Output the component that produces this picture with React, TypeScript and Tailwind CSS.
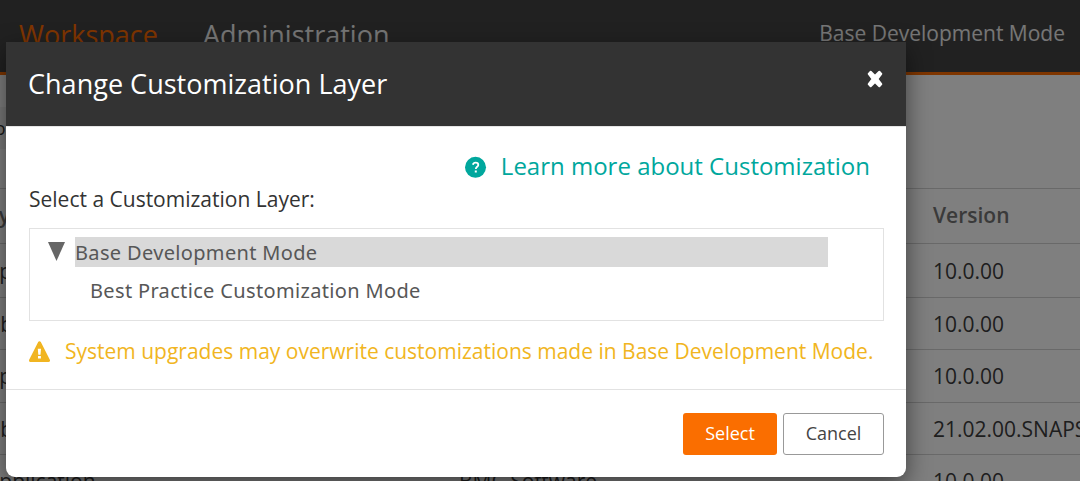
import React from "react";

const rows = [
  { type: "Application", vendor: "BMC Software", version: "10.0.00", height: "h-[54px]", shift: "" },
  { type: "Library", vendor: "BMC Software", version: "10.0.00", height: "h-[52px]", shift: "-indent-[2px]" },
  { type: "Application", vendor: "BMC Software", version: "10.0.00", height: "h-[53px]", shift: "" },
  { type: "Library", vendor: "BMC Software", version: "21.02.00.SNAPSHOT", height: "h-[52px]", shift: "-indent-[2px]" },
  { type: "Application", vendor: "BMC Software", version: "10.0.00", height: "h-[53px]", shift: "" },
];

function CloseIcon() {
  return (
    <svg width="16" height="18" viewBox="0 0 16 18" fill="white" stroke="white" strokeWidth="2" strokeLinejoin="round">
      <path d="M3.7 1.7 8 6 12.3 1.7 14.3 4 10.5 9 14.3 14 12.3 16.3 8 12 3.7 16.3 1.7 14 5.5 9 1.7 4Z" />
    </svg>
  );
}

function HelpIcon() {
  return (
    <svg width="22" height="22" viewBox="0 0 22 22" fill="none">
      <circle cx="10.5" cy="11.3" r="10.5" fill="#00a79d" />
      <path d="M7.9 8.8C8.3 7.2 9.3 6.7 10.6 6.7c1.7 0 2.7.9 2.7 2.2 0 1.8-2.5 1.9-2.5 4" stroke="white" strokeWidth="1.8" />
      <path d="M9.8 14.4h2v2h-2z" fill="white" />
    </svg>
  );
}

function WarningIcon() {
  return (
    <svg width="22" height="22" viewBox="0 0 22 22">
      <path d="M11.5 1.8 20.5 19.4H2.5Z" fill="#f1b521" stroke="#f1b521" strokeWidth="3" strokeLinejoin="round" />
      <path d="M9.8 7.8h3.2l-.5 6h-2.2zM10 15h2.9v2.6H10z" fill="white" />
    </svg>
  );
}

function Background() {
  return (
    <div className="flex h-[481px] flex-col overflow-hidden bg-white">
      <header className="flex h-[75px] shrink-0 items-start justify-between border-b-[3px] border-[#ff6d00] bg-[#424242] pr-[15px] pl-[19px]">
        <nav className="flex gap-[45px] text-[27px] leading-[70px]">
          <span className="text-[#fe6a00]">Workspace</span>
          <span className="text-[#ededed]">Administration</span>
        </nav>
        <span className="text-[21px] leading-[67px] text-[#ededed]">Base Development Mode</span>
      </header>
      <div className="flex h-[113px] shrink-0 pt-8">
        <div className="-ml-[38px] h-[42px] w-[240px] bg-[#f2f2f2] pl-[12px] text-[18px] leading-[42px] text-[#333]">Tool</div>
      </div>
      <div className="-ml-[13px] flex h-[55px] shrink-0 items-center border-t border-[#d2d2d2] text-[21px] font-semibold text-[#747474]">
        <span className="w-[473px] shrink-0">Type</span>
        <span className="w-[473px] shrink-0">Vendor</span>
        <span>Version</span>
      </div>
      {rows.map((row, i) => (
        <div key={i} className={`-ml-[14px] flex shrink-0 items-center border-t border-[#d2d2d2] pt-[2px] text-[21px] whitespace-nowrap text-[#3c3c3c] ${row.height}`}>
          <span className={`w-[473px] shrink-0 ${row.shift}`}>{row.type}</span>
          <span className="w-[474px] shrink-0">{row.vendor}</span>
          <span>{row.version}</span>
        </div>
      ))}
    </div>
  );
}

function Dialog() {
  return (
    <section role="dialog" className="absolute top-[42px] left-[6px] flex h-[435px] w-[900px] flex-col overflow-hidden rounded-b-[9px] bg-white shadow-[0_8px_23px_rgba(0,0,0,0.5)]">
      <header className="flex h-[85px] shrink-0 items-start justify-between border-b border-[#e5e5e5] bg-[#333] pr-[23px] pl-[22px]">
        <h1 className="text-[27px] leading-[84px] tracking-[0.02px] text-white">Change Customization Layer</h1>
        <button className="mt-[28px]" aria-label="Close"><CloseIcon /></button>
      </header>
      <div className="flex h-[262px] shrink-0 flex-col pr-[22px] pl-[23px]">
        <a className="mt-[21px] flex h-[36px] items-center justify-end gap-[14px] pr-[14px] text-[24px] leading-[36px] text-[#00a79d]">
          <span className="pt-[2px]"><HelpIcon /></span>
          Learn more about Customization
        </a>
        <p className="h-[30px] text-[21px] leading-[30px] text-[#333]">Select a Customization Layer:</p>
        <div className="mt-[14px] flex h-[93px] shrink-0 flex-col border border-[#e2e2e2] pt-2 pl-[18px] font-['Noto_Sans',sans-serif] text-[20px] tracking-[0.34px] text-[#575757]">
          <div className="flex h-[30px]">
            <svg className="mt-[5px] mr-[10px]" width="17" height="19" viewBox="0 0 17 19">
              <path d="M0 0H17L8.5 19Z" fill="#666" />
            </svg>
            <span className="w-[753px] bg-[#d9d9d9] leading-[32px]">Base Development Mode</span>
          </div>
          <span className="mt-2 pl-[42px] leading-[32px]">Best Practice Customization Mode</span>
        </div>
        <div className="mt-[15px] flex h-[30px] gap-[15px] text-[21px] leading-[30px] whitespace-nowrap text-[#f1b521]">
          <span className="mt-[5px] -ml-px shrink-0"><WarningIcon /></span>
          <span>System upgrades may overwrite customizations made in Base Development Mode.</span>
        </div>
      </div>
      <footer className="flex flex-1 justify-end gap-[6px] border-t border-[#e2e2e2] pt-[23px] pr-[22px] text-[18px]">
        <button className="h-[42px] w-[94px] rounded-[3px] bg-[#fa6e00] pb-[2px] leading-[40px] text-white">Select</button>
        <button className="h-[42px] w-[101px] rounded-[3px] border border-[#999] pb-[2px] leading-[38px] text-[#444]">Cancel</button>
      </footer>
    </section>
  );
}

export default function App() {
  return (
    <main className="relative h-[481px] w-[1080px] overflow-hidden font-['Open_Sans',sans-serif]">
      <Background />
      <div className="absolute inset-0 bg-black/50" />
      <Dialog />
    </main>
  );
}
